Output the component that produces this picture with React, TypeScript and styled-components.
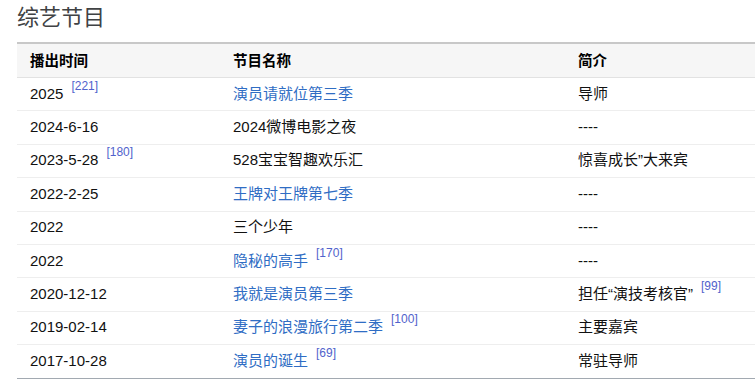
import React from 'react';
import styled, { createGlobalStyle } from 'styled-components';

const GlobalStyle = createGlobalStyle`
  html, body {
    margin: 0;
    padding: 0;
    background: #fff;
    overflow: hidden;
  }
  body {
    font-family: "Liberation Sans", Arial, "Noto Sans CJK SC", sans-serif;
    color: #202122;
  }
`;

const Page = styled.div`
  padding: 0 0 0 17px;
  width: 760px;
`;

const Title = styled.h2`
  margin: 0;
  padding-top: 1px;
  height: 41px;
  font-family: "Noto Sans CJK SC", sans-serif;
  font-weight: 400;
  font-size: 22px;
  line-height: 28px;
  color: #404244;
`;

const Table = styled.table`
  width: 745px;
  border-collapse: collapse;
  table-layout: fixed;
  font-size: 15px;
  border-top: 2px solid #c8c8c8;
  border-bottom: 1px solid #a2a9b1;
`;

const HeadRow = styled.tr`
  background: #f6f6f6;
  border-bottom: 1px solid #e2e2e2;
`;

const Th = styled.th<{ $w?: number }>`
  width: ${({ $w }) => ($w ? `${$w}px` : 'auto')};
  text-align: left;
  font-weight: 700;
  font-size: 14.5px;
  padding: 0 13px 2px;
  height: 31px;
  line-height: 20px;
  font-family: "Noto Sans CJK SC", sans-serif;
  color: #000;
`;

const Row = styled.tr`
  border-bottom: 1px solid #eeeeee;
  &:last-child {
    border-bottom: none;
  }
`;

const Td = styled.td`
  padding: 0 13px 1px;
  height: 31.4px;
  line-height: 20px;
  color: #111;
  white-space: nowrap;
`;

const Link = styled.span`
  color: #2f6dc4;
`;

const Ref = styled.sup`
  font-size: 12px;
  color: #5162cc;
  margin-left: 8px;
  vertical-align: 9px;
  line-height: 0;
`;

type Show = { date: string; dateRef?: string; name: string; link: boolean; nameRef?: string; note: string; noteRef?: string };

const shows: Show[] = [
  { date: '2025', dateRef: '221', name: '演员请就位第三季', link: true, note: '导师' },
  { date: '2024-6-16', name: '2024微博电影之夜', link: false, note: '----' },
  { date: '2023-5-28', dateRef: '180', name: '528宝宝智趣欢乐汇', link: false, note: '惊喜成长”大来宾' },
  { date: '2022-2-25', name: '王牌对王牌第七季', link: true, note: '----' },
  { date: '2022', name: '三个少年', link: false, note: '----' },
  { date: '2022', name: '隐秘的高手', link: true, nameRef: '170', note: '----' },
  { date: '2020-12-12', name: '我就是演员第三季', link: true, note: '担任“演技考核官”', noteRef: '99' },
  { date: '2019-02-14', name: '妻子的浪漫旅行第二季', link: true, nameRef: '100', note: '主要嘉宾' },
  { date: '2017-10-28', name: '演员的诞生', link: true, nameRef: '69', note: '常驻导师' },
];

const App = () => (
  <>
    <GlobalStyle />
    <Page>
      <Title>综艺节目</Title>
      <Table>
        <thead>
          <HeadRow>
            <Th $w={177}>播出时间</Th>
            <Th $w={319}>节目名称</Th>
            <Th>简介</Th>
          </HeadRow>
        </thead>
        <tbody>
          {shows.map((s, i) => (
            <Row key={i}>
              <Td>
                {s.date}
                {s.dateRef && <Ref>[{s.dateRef}]</Ref>}
              </Td>
              <Td>
                {s.link ? <Link>{s.name}</Link> : s.name}
                {s.nameRef && <Ref>[{s.nameRef}]</Ref>}
              </Td>
              <Td>
                {s.note}
                {s.noteRef && <Ref>[{s.noteRef}]</Ref>}
              </Td>
            </Row>
          ))}
        </tbody>
      </Table>
    </Page>
  </>
);

export default App;
